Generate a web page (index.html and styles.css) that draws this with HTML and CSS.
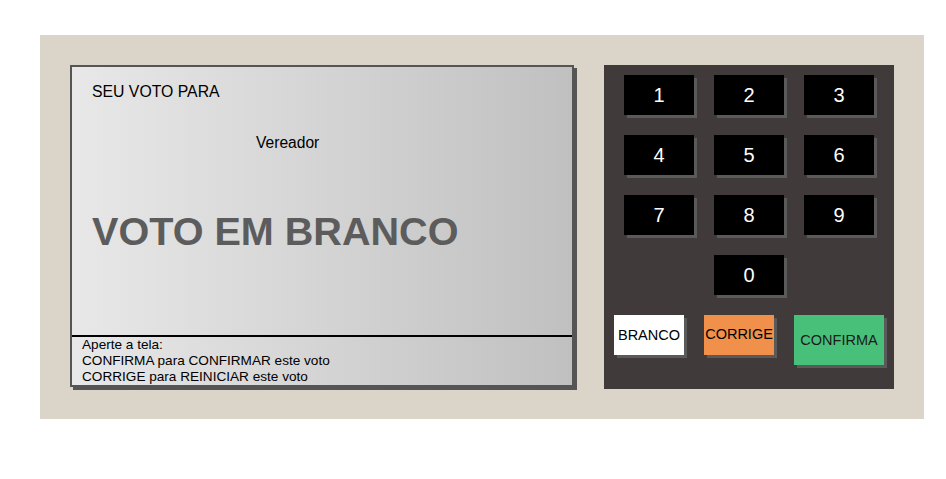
FILE: index.html
```html
<!DOCTYPE html>
<html lang="pt">
<head>
<meta charset="utf-8">
<title>Urna</title>
<link rel="stylesheet" href="styles.css">
</head>
<body>
<div class="urna">
  <div class="tela">
    <div class="tela-topo">
      <div class="titulo">SEU VOTO PARA</div>
      <div class="cargo">Vereador</div>
      <div class="aviso">VOTO EM BRANCO</div>
    </div>
    <div class="tela-rodape">
      <div>Aperte a tela:</div>
      <div>CONFIRMA para CONFIRMAR este voto</div>
      <div>CORRIGE para REINICIAR este voto</div>
    </div>
  </div>
  <div class="teclado">
    <div class="numeros">
      <div class="tecla">1</div>
      <div class="tecla">2</div>
      <div class="tecla">3</div>
      <div class="tecla">4</div>
      <div class="tecla">5</div>
      <div class="tecla">6</div>
      <div class="tecla">7</div>
      <div class="tecla">8</div>
      <div class="tecla">9</div>
      <div class="tecla zero">0</div>
    </div>
    <div class="acoes">
      <div class="botao branco">BRANCO</div>
      <div class="botao corrige">CORRIGE</div>
      <div class="botao confirma">CONFIRMA</div>
    </div>
  </div>
</div>
</body>
</html>
```

FILE: styles.css
```css
html, body {
  margin: 0;
  padding: 0;
  background: #ffffff;
}
body {
  padding: 35px 0 0 40px;
  font-family: "Liberation Sans", Arial, sans-serif;
}
.urna {
  width: 884px;
  height: 384px;
  box-sizing: border-box;
  padding: 30px;
  background: #dbd5c9;
  display: flex;
  align-items: flex-start;
  gap: 30px;
}
.tela {
  width: 504px;
  height: 322px;
  box-sizing: border-box;
  border: 2px solid #555555;
  box-shadow: 3px 3px 0 #555555;
  background: linear-gradient(to right, #e8e8e8, #c0c0c0);
  display: flex;
  flex-direction: column;
}
.tela-topo {
  height: 270px;
  flex-shrink: 0;
  box-sizing: border-box;
  padding: 16px 20px 0 20px;
  border-bottom: 2px solid #000000;
  color: #000000;
}
.titulo {
  font-size: 15.8px;
  line-height: 18px;
}
.cargo {
  font-size: 15.6px;
  line-height: 18px;
  margin: 33px 0 0 164px;
}
.aviso {
  font-size: 39.6px;
  font-weight: bold;
  line-height: 46px;
  color: #5c5c5c;
  margin-top: 56px;
}
.tela-rodape {
  padding: 0 10px;
  font-size: 13.6px;
  line-height: 16px;
  color: #000000;
}
.teclado {
  width: 290px;
  height: 324px;
  box-sizing: border-box;
  background: #403a3a;
  padding: 10px 10px 0 10px;
}
.numeros {
  display: grid;
  grid-template-columns: repeat(3, 70px);
  grid-auto-rows: 40px;
  gap: 20px;
  padding-left: 10px;
}
.tecla {
  background: #000000;
  color: #ffffff;
  font-size: 20px;
  display: flex;
  align-items: center;
  justify-content: center;
  box-shadow: 3px 3px 0 #5a5a5a;
}
.zero {
  grid-column: 2;
}
.acoes {
  display: flex;
  align-items: flex-start;
  gap: 20px;
  margin-top: 20px;
}
.botao {
  width: 70px;
  height: 40px;
  display: flex;
  align-items: center;
  justify-content: center;
  font-size: 14.5px;
  color: #000000;
  box-shadow: 3px 3px 0 #5a5a5a;
  white-space: nowrap;
}
.branco {
  background: #ffffff;
}
.corrige {
  background: #f0904a;
  padding-bottom: 2px;
  box-sizing: border-box;
}
.confirma {
  width: 90px;
  height: 50px;
  background: #48c07a;
  color: #1a1a1a;
}
```
